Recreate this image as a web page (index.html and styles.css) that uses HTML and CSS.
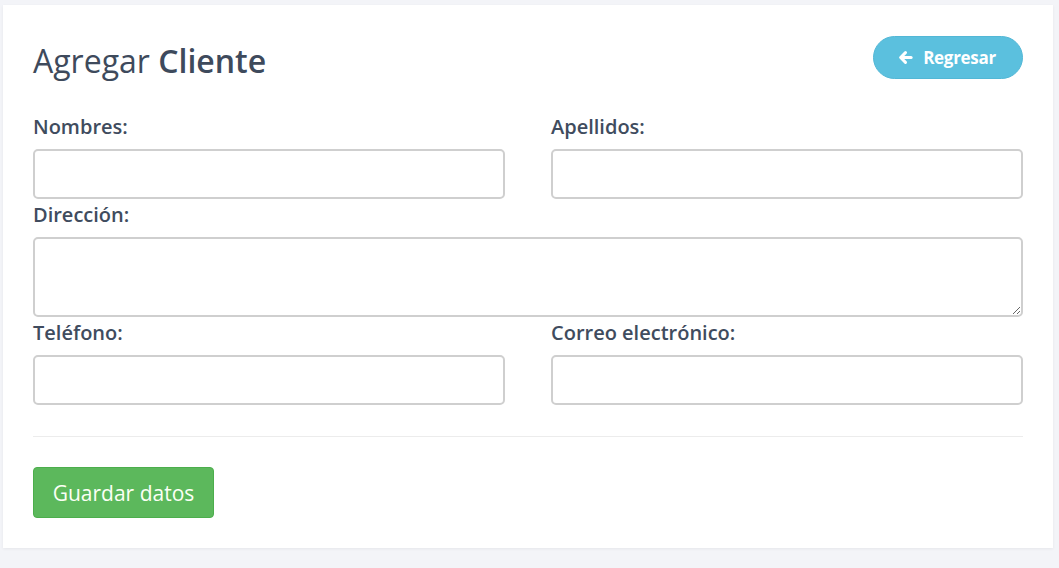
FILE: index.html
```html
<!DOCTYPE html>
<html lang="es">
<head>
<meta charset="utf-8">
<title>Agregar Cliente</title>
<link rel="stylesheet" href="styles.css">
</head>
<body>
<div class="card">
  <div class="card-header">
    <h1 class="title"><span class="light">Agregar</span> <strong>Cliente</strong></h1>
    <a class="btn-back" href="#">
      <svg class="icon" viewBox="0 0 16 16" width="15" height="15" aria-hidden="true">
        <path d="M14 8H4.5" fill="none" stroke="#fff" stroke-width="3.2" stroke-linecap="round"/>
        <path d="M8 2.8L2.8 8L8 13.2" fill="none" stroke="#fff" stroke-width="3.2" stroke-linecap="round" stroke-linejoin="round"/>
      </svg>
      <span>Regresar</span>
    </a>
  </div>
  <form class="form">
    <div class="row two">
      <div class="field">
        <label>Nombres:</label>
        <input type="text" class="input">
      </div>
      <div class="field">
        <label>Apellidos:</label>
        <input type="text" class="input">
      </div>
    </div>
    <div class="row">
      <div class="field">
        <label>Dirección:</label>
        <textarea class="input textarea"></textarea>
      </div>
    </div>
    <div class="row two">
      <div class="field">
        <label>Teléfono:</label>
        <input type="text" class="input">
      </div>
      <div class="field">
        <label>Correo electrónico:</label>
        <input type="text" class="input">
      </div>
    </div>
    <hr class="divider">
    <button type="button" class="btn-save">Guardar datos</button>
  </form>
</div>
</body>
</html>
```
FILE: styles.css
```css
html, body {
  margin: 0;
  padding: 0;
}
body {
  background: #f3f4f8;
  font-family: "Open Sans", "Liberation Sans", sans-serif;
  color: #3e4a5c;
  padding: 5px 6px 20px 3px;
}
.card {
  background: #fff;
  padding: 30px 30px 30px 30px;
  box-shadow: 0 1px 3px rgba(0,0,0,0.06);
}
.card-header {
  display: flex;
  justify-content: space-between;
  align-items: flex-start;
  height: 44px;
}
.title {
  margin: 6px 0 0 0;
  font-size: 32px;
  line-height: 40px;
  font-weight: 400;
  color: #3e4a5c;
}
.title strong {
  font-weight: 600;
}
.btn-back {
  margin-top: 1px;
  display: flex;
  align-items: center;
  justify-content: center;
  gap: 10px;
  width: 150px;
  height: 43px;
  box-sizing: border-box;
  border-radius: 22px;
  background: #5bc0de;
  border: 1px solid #52b7d6;
  color: #fff;
  font-weight: 700;
  font-size: 17px;
  text-decoration: none;
  letter-spacing: -0.3px;
  padding-right: 2px;
}
.btn-back .icon {
  display: block;
}
.form {
  margin-top: 32px;
}
.row {
  display: grid;
  grid-template-columns: 1fr;
}
.row.two {
  grid-template-columns: 1fr 1fr;
  column-gap: 46px;
}
.field {
  display: flex;
  flex-direction: column;
}
label {
  display: block;
  font-size: 20px;
  font-weight: 600;
  line-height: 26px;
  padding-top: 3px;
  margin-bottom: 9px;
  color: #404c5e;
}
.input {
  display: block;
  box-sizing: border-box;
  width: 100%;
  height: 50px;
  margin: 0;
  border: 2px solid #cfcfcf;
  border-radius: 5px;
  background: #fff;
  font-family: inherit;
  font-size: 18px;
  padding: 6px 12px;
  outline: none;
}
.textarea {
  height: 80px;
  resize: vertical;
}
.divider {
  border: 0;
  border-top: 1px solid #ececec;
  margin: 31px 0 30px 0;
  height: 0;
}
.btn-save {
  display: block;
  width: 181px;
  height: 51px;
  background: #5cb85c;
  border: 1px solid #4cae4c;
  border-radius: 4px;
  color: #fbfff5;
  font-family: inherit;
  font-size: 21px;
  font-weight: 400;
  padding: 0;
  cursor: pointer;
}
```
